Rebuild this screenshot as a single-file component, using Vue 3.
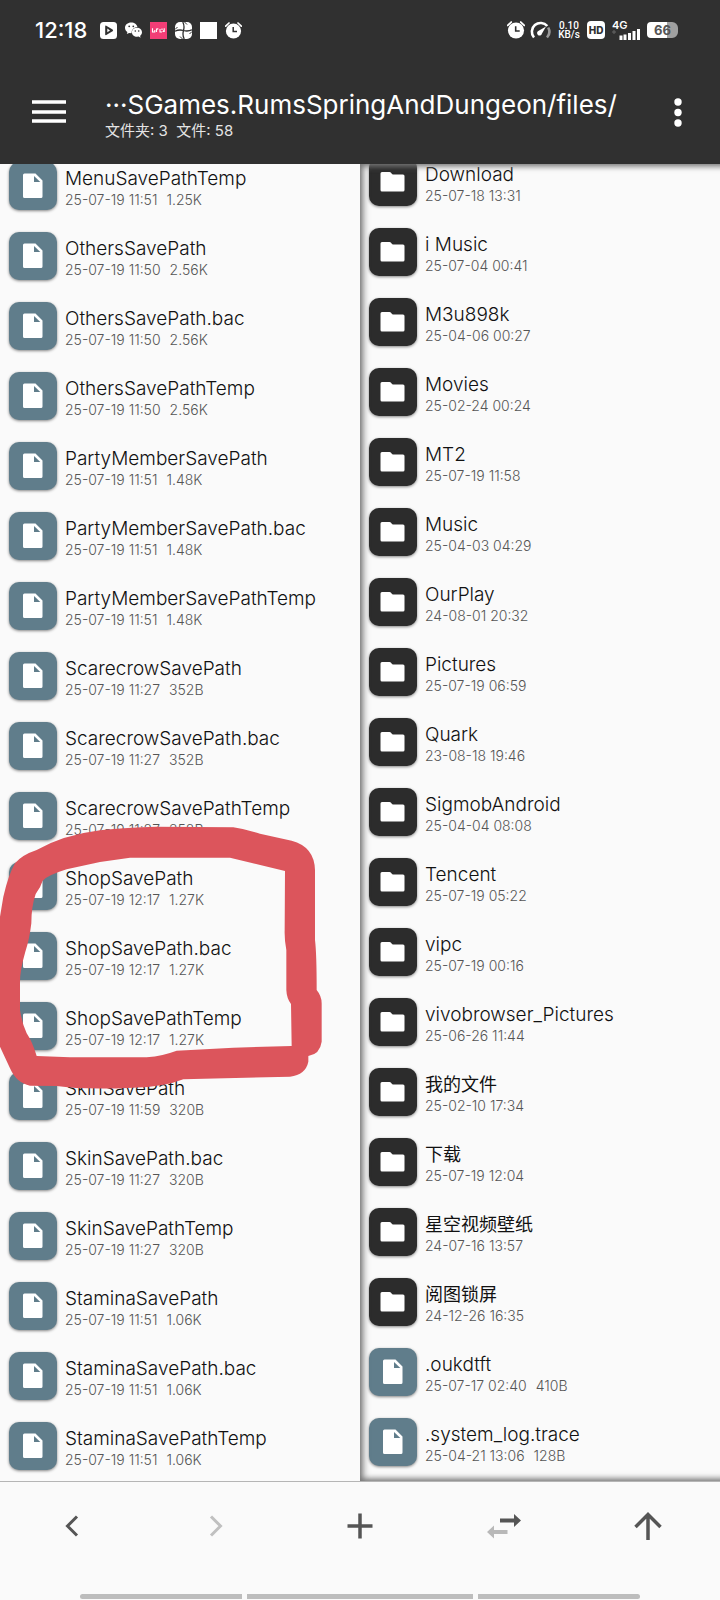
<script setup>
const files = [
  ['MenuSavePathTemp', '25-07-19 11:51', '1.25K'],
  ['OthersSavePath', '25-07-19 11:50', '2.56K'],
  ['OthersSavePath.bac', '25-07-19 11:50', '2.56K'],
  ['OthersSavePathTemp', '25-07-19 11:50', '2.56K'],
  ['PartyMemberSavePath', '25-07-19 11:51', '1.48K'],
  ['PartyMemberSavePath.bac', '25-07-19 11:51', '1.48K'],
  ['PartyMemberSavePathTemp', '25-07-19 11:51', '1.48K'],
  ['ScarecrowSavePath', '25-07-19 11:27', '352B'],
  ['ScarecrowSavePath.bac', '25-07-19 11:27', '352B'],
  ['ScarecrowSavePathTemp', '25-07-19 11:27', '352B'],
  ['ShopSavePath', '25-07-19 12:17', '1.27K'],
  ['ShopSavePath.bac', '25-07-19 12:17', '1.27K'],
  ['ShopSavePathTemp', '25-07-19 12:17', '1.27K'],
  ['SkinSavePath', '25-07-19 11:59', '320B'],
  ['SkinSavePath.bac', '25-07-19 11:27', '320B'],
  ['SkinSavePathTemp', '25-07-19 11:27', '320B'],
  ['StaminaSavePath', '25-07-19 11:51', '1.06K'],
  ['StaminaSavePath.bac', '25-07-19 11:51', '1.06K'],
  ['StaminaSavePathTemp', '25-07-19 11:51', '1.06K'],
]
const storage = [
  ['Download', '25-07-18 13:31'],
  ['i Music', '25-07-04 00:41'],
  ['M3u898k', '25-04-06 00:27'],
  ['Movies', '25-02-24 00:24'],
  ['MT2', '25-07-19 11:58'],
  ['Music', '25-04-03 04:29'],
  ['OurPlay', '24-08-01 20:32'],
  ['Pictures', '25-07-19 06:59'],
  ['Quark', '23-08-18 19:46'],
  ['SigmobAndroid', '25-04-04 08:08'],
  ['Tencent', '25-07-19 05:22'],
  ['vipc', '25-07-19 00:16'],
  ['vivobrowser_Pictures', '25-06-26 11:44'],
  ['我的文件', '25-02-10 17:34'],
  ['下载', '25-07-19 12:04'],
  ['星空视频壁纸', '24-07-16 13:57'],
  ['阅图锁屏', '24-12-26 16:35'],
  ['.oukdtft', '25-07-17 02:40', '410B'],
  ['.system_log.trace', '25-04-21 13:06', '128B'],
]
const panels = [
  { id: 'left', rows: files },
  { id: 'right', rows: storage },
]
const isHan = (s) => /[\u4e00-\u9fff]/.test(s)
</script>

<template>
  <div class="screen">
    <header class="top">
      <div class="status">
        <div class="status-left">
          <span class="clock">12:18</span>
          <svg class="sicon" viewBox="0 0 17 17"><rect width="17" height="17" rx="3.5" fill="#fff" /><path d="M5.2 4.400 Q5.200 3.200 6.300 3.700 L12.600 7.500 Q13.600 8.400 12.600 9.300 L6.300 13.100 Q5.200 13.500 5.200 12.400Z" fill="#303030" /><path d="M7.300 6.600 L10 8.400 L7.300 10.200Z" fill="#fff" /></svg>
          <svg class="sicon" viewBox="0 0 17 17"><path d="M6.2 .5 C2.6 .5 0 2.8 0 5.8 C0 7.6 .9 9 2.4 10 L1.8 12 L4.1 10.9 L6.5 11.2 A6 6 0 0 1 12.4 5 C12 2.400 9.500 .5 6.200 .5Z" fill="#fff" /><path d="M12 5.700 C9 5.700 6.900 7.700 6.900 10.200 C6.900 12.900 9.200 14.800 12 14.800 L13.600 14.600 L15.600 15.700 L15.100 13.900 C16.300 13 17 11.700 17 10.300 C17 7.700 14.800 5.700 12 5.700Z" fill="#fff" /><g fill="#303030"><circle cx="4.200" cy="4.300" r=".9" /><circle cx="8.300" cy="4.300" r=".9" /><circle cx="10.300" cy="9" r=".8" /><circle cx="13.700" cy="9" r=".8" /></g></svg>
          <svg class="sicon" viewBox="0 0 17 17"><rect width="17" height="17" fill="#f23d76" /><path d="M2.500 6.200V10H4.800V8M6.500 6.500V10M8 6.200L7.500 7.500M10 7V10H12M12 6.500V8M14.200 6.200V10M14.200 8.200L12.700 10" fill="none" stroke="#fff" stroke-width="1.100" /></svg>
          <svg class="sicon" viewBox="0 0 17 17"><rect width="17" height="17" rx="5" fill="#fff" /><path d="M8.500 8.500Q9.800 4 7.800 0M8.500 8.500Q13 9.800 17 7.800M8.500 8.500Q7.200 13 9.200 17M8.500 8.500Q4 7.200 0 9.200" fill="none" stroke="#303030" stroke-width="1.300" /><path d="M9.500 0L12 2.500M17 9.500L14.500 12M7.500 17L5 14.500M0 7.500L2.500 5" stroke="#303030" stroke-width="1" /></svg>
          <svg class="sicon" viewBox="0 0 17 17"><rect width="17" height="17" fill="#fff" /></svg>
          <svg class="sicon" viewBox="0 0 17 17"><circle cx="8.500" cy="9" r="7.600" fill="#fff" /><path d="M.7 4.200L4 1M16.300 4.200L13 1" stroke="#fff" stroke-width="1.700" stroke-linecap="round" /><path d="M8.200 5V9.500H12" fill="none" stroke="#303030" stroke-width="1.500" /></svg>
        </div>
        <div class="status-right">
          <svg class="sicon alarm" viewBox="0 0 17 17"><circle cx="8.500" cy="9" r="7.600" fill="#fff" /><path d="M.7 4.200L4 1M16.300 4.200L13 1" stroke="#fff" stroke-width="1.700" stroke-linecap="round" /><path d="M8.200 5V9.500H12" fill="none" stroke="#303030" stroke-width="1.500" /></svg>
          <svg class="gauge" viewBox="0 0 21 18"><path d="M4 16.500A8.700 8.700 0 1 1 17.300 5" fill="none" stroke="#fff" stroke-width="2.600" /><path d="M18.200 6.500A8.700 8.700 0 0 1 17 16.500" fill="none" stroke="#999" stroke-width="2.600" /><path d="M16 5.500L12 12.600A2.500 2.500 0 1 1 8.700 9.700Z" fill="#fff" /></svg>
          <span class="speed"><span>0.10</span><span>KB/s</span></span>
          <span class="hd">HD</span>
          <span class="net"><span>4G</span><svg viewBox="0 0 28 11"><path d="M2 1V5M0 3H4" stroke="#666" stroke-width="1" /><path d="M9 6.500V11M13 5.500V11M17.500 4V11M22 2V11M26.500 0V11" stroke="#fff" stroke-width="3" /></svg></span>
          <span class="battery">66</span>
        </div>
      </div>
      <div class="bar">
        <button class="menu" aria-label="Menu"><svg viewBox="0 0 34 24"><path d="M0 2H34M0 12H34M0 21H34" stroke="#fff" stroke-width="3.500" /></svg></button>
        <div class="titles">
          <h1>···SGames.RumsSpringAndDungeon/files/</h1>
          <p>文件夹: 3&nbsp; 文件: 58</p>
        </div>
        <button class="more" aria-label="More"><svg viewBox="0 0 8 30"><g fill="#fff"><circle cx="4" cy="5" r="3.700" /><circle cx="4" cy="15.500" r="3.700" /><circle cx="4" cy="26" r="3.700" /></g></svg></button>
      </div>
    </header>

    <main class="panels">
      <section v-for="p in panels" :key="p.id" class="panel" :class="p.id">
        <ul>
          <li v-for="r in p.rows" :key="r[0]">
            <span class="tile" :class="{ folder: p.id === 'right' && !r[2] }">
              <svg v-if="p.id === 'right' && !r[2]" viewBox="0 0 48 48"><path d="M13 14H20.500Q21.500 14 22 14.700L22.800 15.800Q23.200 16.400 24 16.400H34Q35.500 16.400 35.500 18V32Q35.500 33.500 34 33.500H13Q11.500 33.500 11.500 32V15.500Q11.500 14 13 14Z" fill="#fff" /></svg>
              <svg v-else viewBox="0 0 48 48"><path d="M15.500 11.500H26.500L33.500 18.500V34.500Q33.500 36 32 36H15.500Q14 36 14 34.500V13Q14 11.500 15.500 11.500ZM25 14V20H31.300Z" fill="#fff" fill-rule="evenodd" /></svg>
            </span>
            <span class="info">
              <span class="name" :class="{ han: isHan(r[0]) }">{{ r[0] }}</span>
              <span class="meta"><span>{{ r[1] }}</span><span v-if="r[2]">{{ r[2] }}</span></span>
            </span>
          </li>
        </ul>
        <svg v-if="p.id === 'left'" class="mark" viewBox="0 0 1080 960"><path fill="#dc555c" fill-rule="evenodd" d="M700 82Q735 87 780 101L875 122Q943 140 945 210V420Q950 460 950 570Q965 588 965 610V725Q960 762 925 768V785Q917 824 870 830L550 838Q490 862 400 863Q250 870 170 858L90 857Q50 850 30 805L0 740V350L10 290Q25 225 45 190Q65 165 110 150Q190 105 300 91Q380 82 470 80ZM690 173H390L300 186L200 208Q145 225 128 242Q122 262 107 282Q94 320 94 370Q88 420 76 455Q60 510 60 545V630Q66 670 80 700Q97 725 110 768L210 772H440Q490 767 530 752L700 743L875 738L873 612Q860 595 859 570V450Q853 420 854 390L855 213Z" /></svg>
      </section>
    </main>

    <nav class="tools">
      <button aria-label="Back"><svg viewBox="0 0 36 36"><path d="M23 8.500L13.500 18L23 27.500" fill="none" stroke="#555" stroke-width="3" /></svg></button>
      <button aria-label="Forward" disabled><svg viewBox="0 0 36 36"><path d="M13 8.500L22.500 18L13 27.500" fill="none" stroke="#c0c0c0" stroke-width="3" /></svg></button>
      <button aria-label="Add"><svg viewBox="0 0 36 36"><path d="M18 5.500V30.500M5.500 18H30.500" stroke="#555" stroke-width="3.500" /></svg></button>
      <button aria-label="Swap"><svg viewBox="0 0 36 36"><path d="M14 10.500H28V6L35 12.500L28 19V14.500H14Z" fill="#555" /><path d="M21.500 22H8V17.500L1 24L8 30.500V26H21.500Z" fill="#b8b8b8" /></svg></button>
      <button aria-label="Up"><svg viewBox="0 0 36 36"><path d="M18 32V6.500M5.500 19L18 6.500L30.500 19" fill="none" stroke="#555" stroke-width="3.500" /></svg></button>
    </nav>
    <div class="handles"><i></i><i class="wide"></i><i></i></div>
  </div>
</template>

<style>
body { background: #fafafa; }
</style>

<style scoped>
.screen { min-height: 100vh; display: flex; flex-direction: column; background: #fafafa; font-family: Inter, "Noto Sans CJK SC", sans-serif; overflow: hidden; }
button { border: 0; padding: 0; background: none; display: flex; align-items: center; justify-content: center; }
svg { display: block; }
.top { background: #303030; color: #fff; }
.status { display: flex; justify-content: space-between; align-items: center; height: 60px; padding: 0 42px 0 35px; }
.status-left { display: flex; align-items: center; gap: 8px; }
.clock { font-size: 22px; line-height: 24px; font-weight: 500; margin-right: 5px; }
.sicon { width: 17px; height: 17px; }
.status-right { display: flex; align-items: center; gap: 7px; }
.sicon.alarm { width: 18px; height: 18px; }
.gauge { width: 21px; height: 18px; margin-left: -2px; }
.speed { display: flex; flex-direction: column; align-items: center; width: 22px; font-size: 10px; line-height: 9px; font-weight: 500; font-family: Roboto, sans-serif; }
.hd { background: #fff; color: #303030; border-radius: 4px; width: 18px; height: 18px; line-height: 18px; text-align: center; font-size: 10px; font-weight: 800; }
.net { width: 28px; font-size: 11px; line-height: 8px; font-weight: 600; }
.net span { display: block; }
.net svg { width: 28px; height: 11px; }
.battery { width: 31px; height: 16px; line-height: 16px; border-radius: 4px 6px 6px 4px; background: linear-gradient(90deg, #fff 66%, #a0a0a0 66%); color: #555; text-align: center; font-size: 13px; font-weight: 700; }
.bar { display: flex; align-items: center; height: 104px; padding: 0 38px 0 32px; }
.menu svg { width: 34px; height: 24px; }
.more svg { width: 8px; height: 30px; }
.titles { flex: 1; margin-left: 39px; white-space: nowrap; }
h1 { margin: 6px 0 0; font-size: 26px; line-height: 32px; font-weight: 400; }
p { margin: 0; font-size: 15px; line-height: 20px; color: #e4e4e4; }
.panels { display: flex; flex: 1; }
.panel { flex: 1; position: relative; overflow: hidden; min-width: 0; border-bottom: 1px solid #b5b5b5; }
.panel.right::after { content: ""; position: absolute; inset: 0 -12px 0 0; pointer-events: none; box-shadow: inset 5px 0 7px -2px #777, inset 0 5px 6px -3px #777, inset 0 -5px 6px -3px #777; }
ul { list-style: none; margin: -13px 0 0; padding: 0; }
.right ul { margin-top: -17px; }
li { height: 70px; display: flex; align-items: center; padding-left: 9px; }
.tile { width: 48px; height: 48px; border-radius: 10px; background: #607d8b; box-shadow: 0 1px 3px #0007; }
.tile.folder { background: #2c2c2c; }
.info { margin-left: 8px; padding-top: 4px; white-space: nowrap; }
.name { display: block; font-size: 19px; line-height: 24px; font-weight: 300; color: #111; }
.name.han { font-size: 18px; font-weight: 400; }
.meta { display: flex; gap: 9px; font-size: 14px; line-height: 18px; font-weight: 300; color: #555; }
.mark { position: absolute; left: 0; top: 636px; width: 360px; height: 320px; }
.tools { display: grid; grid-template-columns: repeat(5, 1fr); height: 88px; }
.tools svg { width: 36px; height: 36px; }
.handles { display: flex; justify-content: center; gap: 5px; padding: 24px 80px 2px; }
.handles i { flex: 162; height: 5px; background: #bdbdbd; border-radius: 3px 0 0 3px; }
.handles .wide { flex: 226; border-radius: 0; }
.handles i:last-child { border-radius: 0 3px 3px 0; }
</style>
